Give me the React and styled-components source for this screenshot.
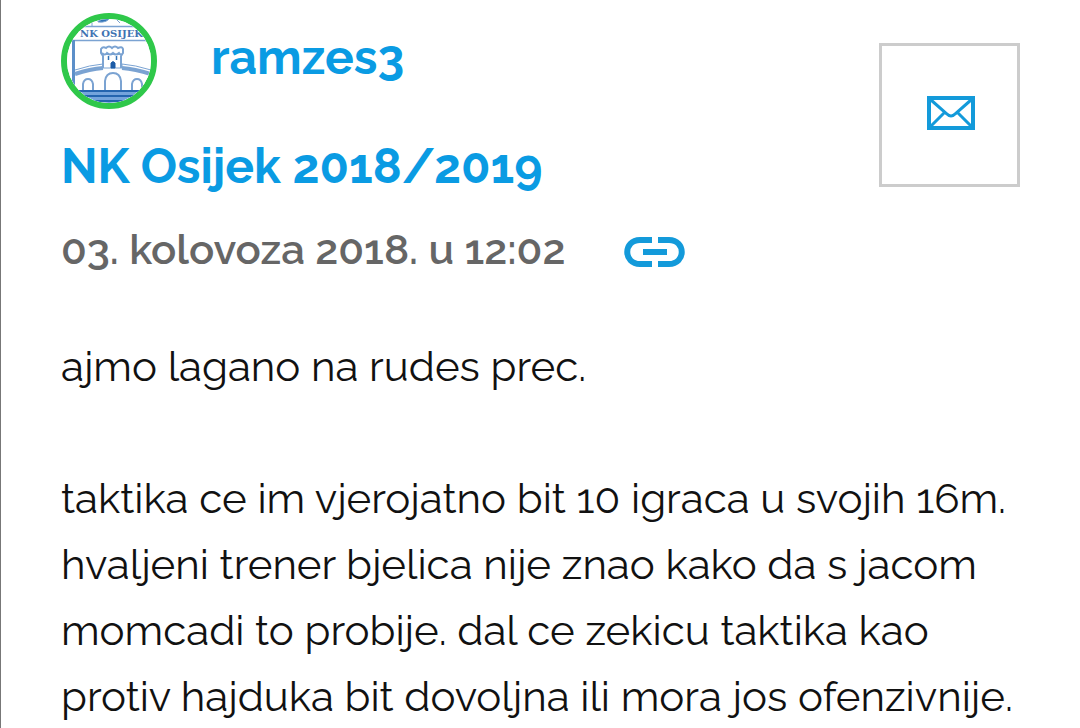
import React from 'react';
import styled, { createGlobalStyle } from 'styled-components';

const GlobalStyle = createGlobalStyle`
	* {
		box-sizing: border-box;
	}
	body {
		margin: 0;
		background: #fff;
		font-family: Raleway, Lato, 'Open Sans', sans-serif;
		font-variant-numeric: oldstyle-nums;
	}
`;

const Post = styled.article`
	height: 100vh;
	overflow: hidden;
	padding: 13px 60px 0;
	border-left: 1px solid #777;
`;

const PostHeader = styled.header`
	display: flex;
	justify-content: space-between;
	align-items: flex-start;
`;

const Author = styled.div`
	display: flex;
	align-items: flex-start;
	gap: 54px;
	height: 96px;
`;

const Avatar = styled.div`
	width: 96px;
	height: 96px;
	border: 6px solid #2fc84a;
	border-radius: 50%;
	overflow: hidden;
	svg {
		display: block;
	}
`;

const Link = styled.a`
	color: #0a9be3;
	font-size: 48px;
	font-weight: 700;
	line-height: 60px;
	text-decoration: none;
`;

const AuthorLink = styled(Link)`
	padding-top: 14px;
`;

const Topic = styled.h1`
	margin: 27px 0 24px;
	font-size: 48px;
	line-height: 60px;
`;

const Meta = styled.div`
	display: flex;
	align-items: center;
	gap: 59px;
	color: #666;
	font-size: 42px;
	font-weight: 600;
	line-height: 60px;
`;

const IconLink = styled.a`
	display: flex;
	padding-top: 3px;
	color: #139ada;
`;

const MessageButton = styled.button`
	display: flex;
	justify-content: center;
	align-items: center;
	width: 141px;
	height: 144px;
	margin-top: 30px;
	padding: 0 0 4px 2px;
	border: 3px solid #ccc;
	background: #fff;
	color: #139ada;
	cursor: pointer;
`;

const PostBody = styled.p`
	margin: 54px 0 0;
	color: #111;
	font-size: 42px;
	line-height: 66px;
	white-space: pre-line;
`;

const text = `ajmo lagano na rudes prec.

taktika ce im vjerojatno bit 10 igraca u svojih 16m.
hvaljeni trener bjelica nije znao kako da s jacom
momcadi to probije. dal ce zekicu taktika kao
protiv hajduka bit dovoljna ili mora jos ofenzivnije.`;

const Crest = () => (
	<svg width='84' height='84' viewBox='0 0 84 84' fill='none' stroke='#7ba3d2' role='img' aria-label='NK Osijek'>
		<rect width='84' height='84' fill='#fff' stroke='none' />
		<path d='M25 0v7M65 0v7' strokeWidth='1' />
		<path d='M31 2q4-1 6-4h6q-2 6-12 5zM49 0l4 4' fill='#3173b7' strokeWidth='1' />
		<path d='M0 7.500h84M0 21.500h84' strokeWidth='1.500' />
		<text
			x='13'
			y='18'
			fill='#3f73b2'
			stroke='none'
			fontFamily='"DejaVu Serif", serif'
			fontSize='10'
			fontWeight='700'
		>
			NK OSIJEK
		</text>
		<path d='M6.500 21v58' stroke='#5c8fc9' strokeWidth='3' />
		<path d='M8 55q15-5 28-6M55 49q13 1 29 6' strokeWidth='4' />
		<path d='M8 51q15-5 28-6v4h19v-4q13 1 29 6' strokeWidth='1' />
		<path
			d='M36 49V37l-2-3v-4q2-3 5-1 3-3 6 0 3-3 6 0 4-2 5 1v4l-2 3v12M35 34q3 3 5 0 3 3 6 0 3 3 6 0 2 3 4 0'
			strokeWidth='2'
		/>
		<path d='M41.500 37v4M49.500 37v4' stroke='#3173b7' strokeWidth='1.500' />
		<path d='M44 49v-5q2-3 4 0v5z' fill='#1d5da7' stroke='#1d5da7' strokeWidth='1' />
		<path
			d='M38 71V62q1-8 8-8t8 8v9M16 71v-6q1-5 5-5t5 5v6M65 71v-6q1-5 5-5t5 5v6'
			strokeWidth='2'
		/>
		<path d='M6 71h78v13H6z' fill='#74a4dc' stroke='none' />
		<path d='M6 72h78M6 77h78M6 82h78' stroke='#2465af' strokeWidth='2' />
	</svg>
);

const LinkIcon = () => (
	<svg width='61' height='32' viewBox='0 0 61 32' fill='none' stroke='currentColor' strokeWidth='6'>
		<path d='M28 4H16C-1 4-1 28 16 28h12M34 4h11c17 0 17 24 0 24H34M19 16h24' />
	</svg>
);

const MailIcon = () => (
	<svg width='48' height='34' viewBox='0 0 48 34' fill='none' stroke='currentColor'>
		<path d='M2 2h44v30H2z' strokeWidth='4' />
		<path d='M4 4l16 14q4 4 8 0L44 4M4 30l13-13M44 30L31 17' strokeWidth='3' />
	</svg>
);

const App = () => (
	<>
		<GlobalStyle />
		<Post>
			<PostHeader>
				<div>
					<Author>
						<Avatar>
							<Crest />
						</Avatar>
						<AuthorLink href='#ramzes3'>ramzes3</AuthorLink>
					</Author>
					<Topic>
						<Link href='#tema'>NK Osijek 2018/2019</Link>
					</Topic>
					<Meta>
						<time dateTime='2018-08-03T12:02'>03. kolovoza 2018. u 12:02</time>
						<IconLink href='#post' aria-label='Poveznica na komentar'>
							<LinkIcon />
						</IconLink>
					</Meta>
				</div>
				<MessageButton type='button' aria-label='Pošalji poruku'>
					<MailIcon />
				</MessageButton>
			</PostHeader>
			<PostBody>{text}</PostBody>
		</Post>
	</>
);

export default App;
